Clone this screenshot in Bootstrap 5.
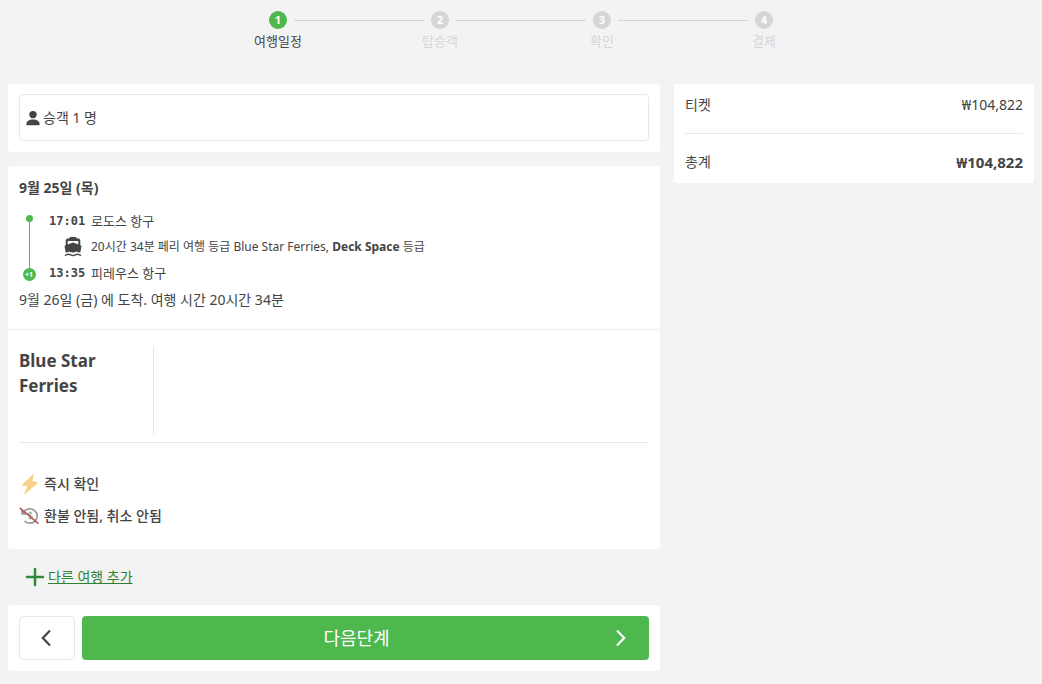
<!DOCTYPE html>
<html lang="ko">
<head>
<meta charset="utf-8">
<meta name="viewport" content="width=device-width, initial-scale=1">
<title>여행일정</title>
<link href="https://cdn.jsdelivr.net/npm/bootstrap@5.3.0/dist/css/bootstrap.min.css" rel="stylesheet">
<style>
  :root { --ink: #444; --line: #e8e8e8; --go: #4eb84e; --off: #d6d6d6; }
  body { background: #f3f3f3; color: var(--ink); font: 14px/20px "Noto Sans", "Noto Sans CJK KR", sans-serif; }
  .steps { padding: 10px 0 32px; }
  .step { flex: 0 1 162px; color: var(--off); font-size: 13px; line-height: 22px; text-align: center; }
  .step-head { gap: 7px; height: 20px; }
  .step-head::before, .step-head::after { content: ""; flex: 1; height: 1px; background: var(--off); }
  .step:first-child .step-head::before, .step:last-child .step-head::after { background: none; }
  .step-dot { width: 18px; height: 18px; background: var(--off); color: #fff; font: bold 11px/18px "Open Sans", sans-serif; }
  .step.current { color: var(--ink); }
  .current .step-dot { background: var(--go); }
  .page-cols { gap: 14px; padding: 0 8px 14px; }
  .left-col { gap: 14px; }
  .right-col { flex: 0 0 360px; }
  .panel { background: #fff; border-radius: 4px; }
  .panel-pad { padding: 10px 11px 11px; }
  .passengers { width: 100%; height: 47px; padding: 0 6px; gap: 3px; border: 1px solid var(--line); border-radius: 4px; background: #fff; color: var(--ink); text-align: left; }
  .trip { padding: 12px 11px 19px; border-bottom: 1px solid #eee; }
  .trip h2 { font-size: 14px; line-height: 20px; font-weight: 700; margin: 0 0 10px; }
  .route { display: grid; grid-template-columns: 20px 42px 1fr; column-gap: 5px; font-size: 12px; line-height: 26px; margin-bottom: 4px; }
  .rail { grid-row: 1 / 4; padding: 7px 0 5px; }
  .rail-dot { width: 7px; height: 7px; background: var(--go); }
  .rail-line { width: 1px; flex: 1; background: var(--go); }
  .rail-end { width: 13px; height: 13px; background: var(--go); color: #fff; font: bold 7px/13px "Open Sans", sans-serif; text-align: center; }
  .time { font: bold 12px/26px "DejaVu Sans Mono", monospace; padding-left: 5px; }
  .ship { padding-right: 4px; }
  .place { font-size: 13px; }
  .carrier { padding: 16px 0 8px; margin: 0 11px; border-bottom: 1px solid var(--line); }
  .carrier h3 { width: 135px; min-height: 88px; margin: 0; padding: 2px 30px 0 0; border-right: 1px solid var(--line); font-size: 17px; line-height: 25px; font-weight: 700; }
  .terms { padding: 25px 11px 17px; margin: 0; font-weight: 500; }
  .terms li { gap: 4px; height: 32px; }
  .add-trip { color: #2f8132; gap: 3px; margin-left: 17px; line-height: 28px; }
  .add-trip:hover { color: #1f6423; }
  .next-bar { gap: 7px; padding: 11px; }
  .back-btn { width: 56px; height: 44px; border: 1px solid var(--line); border-radius: 4px; background: #fff; }
  .next-btn { height: 44px; padding: 0 22px 0 16px; border-radius: 4px; background: var(--go); color: #fff; font-size: 18px; }
  .next-btn:hover { background: #43a443; color: #fff; }
  .sum { padding: 11px; }
  .sum dl { margin: 0; }
  .sum dt, .sum dd { margin: 0; font-weight: 400; }
  .sum .total { border-top: 1px solid var(--line); margin-top: 18px; padding-top: 18px; }
  .sum .total dd { font-weight: 700; font-size: 15px; }
  svg { flex: none; display: block; }
</style>
</head>
<body>
<nav class="steps" aria-label="단계">
  <ol class="list-unstyled d-flex justify-content-center m-0">
    <li class="step current"><div class="step-head d-flex align-items-center"><span class="step-dot rounded-circle">1</span></div>여행일정</li>
    <li class="step"><div class="step-head d-flex align-items-center"><span class="step-dot rounded-circle">2</span></div>탑승객</li>
    <li class="step"><div class="step-head d-flex align-items-center"><span class="step-dot rounded-circle">3</span></div>확인</li>
    <li class="step"><div class="step-head d-flex align-items-center"><span class="step-dot rounded-circle">4</span></div>결제</li>
  </ol>
</nav>
<div class="page-cols d-flex align-items-start">
  <main class="left-col d-flex flex-column flex-grow-1">
    <section class="panel panel-pad">
      <button type="button" class="passengers d-flex align-items-center">
        <svg width="14" height="16" viewBox="0 0 14 16" fill="#444"><circle cx="7" cy="4.600" r="3.700"/><path d="M.5 15.200v-1.600C.5 11 3 9.400 7 9.400s6.500 1.600 6.500 4.200v1.600z"/></svg>
        <span>승객 1 명</span>
      </button>
    </section>
    <section class="panel">
      <div class="trip">
        <h2>9월 25일 (목)</h2>
        <div class="route">
          <div class="rail d-flex flex-column align-items-center">
            <span class="rail-dot rounded-circle"></span><span class="rail-line"></span><span class="rail-end rounded-circle">+1</span>
          </div>
          <span class="time">17:01</span><span class="place">로도스 항구</span>
          <span class="ship d-flex align-items-center justify-content-end">
            <svg width="18" height="20" viewBox="0 0 18 20" fill="#444"><path fill-rule="evenodd" d="M6 0h6l.8 1.500H15L16.300 3v5.200l1.200.9-1.200 6.500c-1.400 0-2.400-.3-3.600-1-1.200.7-2.300 1-3.700 1s-2.500-.3-3.700-1c-1.200.7-2.200 1-3.600 1L.5 9.100l1.200-.9V3L3 1.500h2.200zM3.700 3.900v3.600L9 5.600l5.300 1.900V3.900z"/><path d="M.8 18.400c1.800 0 2.600-1.200 4-1.200s2.600 1.300 4.200 1.300 2.800-1.300 4.200-1.300 2.200 1.200 4 1.200" fill="none" stroke="#444" stroke-width="1.400"/></svg>
          </span>
          <span>20시간 34분 페리 여행 등급 Blue Star Ferries, <b>Deck Space</b> 등급</span>
          <span class="time">13:35</span><span class="place">피레우스 항구</span>
        </div>
        <div class="arrive">9월 26일 (금) 에 도착. 여행 시간 20시간 34분</div>
      </div>
      <div class="carrier"><h3>Blue Star Ferries</h3></div>
      <ul class="terms list-unstyled">
        <li class="d-flex align-items-center">
          <svg width="21" height="20" viewBox="0 0 21 20"><path d="M14.500.2 3.500 11l5.500 1L5.800 19.800 18.500 8.800 12.600 7.500z" fill="#f6d186" stroke="#f6d186" stroke-linejoin="round"/></svg>
          <span>즉시 확인</span>
        </li>
        <li class="d-flex align-items-center">
          <svg width="21" height="18" viewBox="0 0 21 18" fill="none"><path d="M5 4.500A7.400 7.200 0 1 1 5.500 14" stroke="#999" stroke-width="1.700"/><path d="M2.200 2.300v5.500h5.800z" fill="#999"/><path d="M13.200 6.300c-1-1-4-1-4 .7 0 2 4.300 1 4.300 3 0 1.800-3.400 2-4.600.7M11.300 4.600v8.100" stroke="#aaa" stroke-width="1.100"/><path d="m.8.900 18.700 15.700" stroke="#b84c50" stroke-width="1.400"/></svg>
          <span>환불 안됨, 취소 안됨</span>
        </li>
      </ul>
    </section>
    <div class="d-flex">
      <a href="#" class="add-trip d-inline-flex align-items-center">
        <svg width="20" height="20" viewBox="0 0 20 20" stroke="#2f8b38" stroke-width="2.500" stroke-linecap="round"><path d="M10 2v16M2 10h16"/></svg>
        <span>다른 여행 추가</span>
      </a>
    </div>
    <div class="panel next-bar d-flex">
      <button type="button" class="back-btn d-flex align-items-center justify-content-center" aria-label="뒤로">
        <svg width="12" height="18" viewBox="0 0 12 18" fill="none" stroke="#444" stroke-width="2.200"><path d="M9 1.500 1.800 9 9 16.500"/></svg>
      </button>
      <button type="button" class="btn next-btn border-0 d-flex align-items-center flex-grow-1">
        <span class="flex-grow-1">다음단계</span>
        <svg width="12" height="18" viewBox="0 0 12 18" fill="none" stroke="#fff" stroke-width="2.200"><path d="m2 1.500 7.200 7.500L2 16.500"/></svg>
      </button>
    </div>
  </main>
  <aside class="right-col panel sum">
    <dl>
      <div class="d-flex justify-content-between"><dt>티켓</dt><dd>₩104,822</dd></div>
      <div class="total d-flex justify-content-between"><dt>총계</dt><dd>₩104,822</dd></div>
    </dl>
  </aside>
</div>
<script src="https://cdn.jsdelivr.net/npm/bootstrap@5.3.0/dist/js/bootstrap.bundle.min.js"></script>
</body>
</html>
